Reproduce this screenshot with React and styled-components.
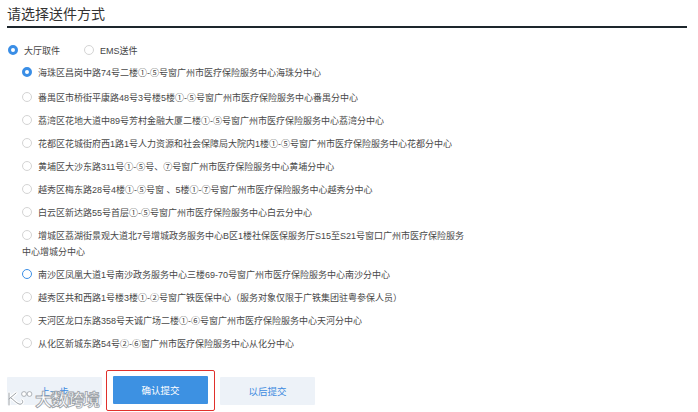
import styled, { createGlobalStyle } from "styled-components";

const addresses = [
  "海珠区昌岗中路74号二楼①-⑤号窗广州市医疗保险服务中心海珠分中心",
  "番禺区市桥街平康路48号3号楼5楼①-⑤号窗广州市医疗保险服务中心番禺分中心",
  "荔湾区花地大道中89号芳村金融大厦二楼①-⑤号窗广州市医疗保险服务中心荔湾分中心",
  "花都区花城街府西1路1号人力资源和社会保障局大院内1楼①-⑤号窗广州市医疗保险服务中心花都分中心",
  "黄埔区大沙东路311号①-⑤号、⑦号窗广州市医疗保险服务中心黄埔分中心",
  "越秀区梅东路28号4楼①-⑤号窗 、5楼①-⑦号窗广州市医疗保险服务中心越秀分中心",
  "白云区新达路55号首层①-⑤号窗广州市医疗保险服务中心白云分中心",
  "增城区荔湖街景观大道北7号增城政务服务中心B区1楼社保医保服务厅S15至S21号窗口广州市医疗保险服务中心增城分中心",
  "南沙区凤凰大道1号南沙政务服务中心三楼69-70号窗广州市医疗保险服务中心南沙分中心",
  "越秀区共和西路1号楼3楼①-②号窗广铁医保中心（服务对象仅限于广铁集团驻粤参保人员）",
  "天河区龙口东路358号天诚广场二楼①-⑥号窗广州市医疗保险服务中心天河分中心",
  "从化区新城东路54号②-⑥窗广州市医疗保险服务中心从化分中心",
];

export default function App() {
  return (
    <>
      <GlobalStyle />
      <Page>
        <Title>请选择送件方式</Title>

        {/* 取件方式 */}
        <ModeRow>
          <Option>
            <Radio $checked />
            大厅取件
          </Option>
          <Option>
            <Radio />
            EMS送件
          </Option>
        </ModeRow>

        <List>
          {addresses.map((text, i) => (
            <Item key={i} $first={i === 0}>
              <Radio $checked={i === 0} $focus={i === 8} />
              {text}
            </Item>
          ))}
        </List>

        <Actions>
          <Button>上一步</Button>
          <Highlight>
            <Button $primary>确认提交</Button>
          </Highlight>
          <Button>以后提交</Button>
        </Actions>

        <Watermark aria-hidden="true">
          <svg width="28" height="18" viewBox="0 0 28 18">
            <path
              d="M4 3 L4 15 M4 9 L11 3 M6 8 C9 10 11 13 14 14 C17 15 19 12 17 10"
              fill="none"
              stroke="#fff"
              strokeWidth="3"
              strokeLinecap="round"
            />
            <path
              d="M4 3 L4 15 M4 9 L11 3 M6 8 C9 10 11 13 14 14 C17 15 19 12 17 10"
              fill="none"
              stroke="#9aa0a6"
              strokeWidth="1"
              strokeLinecap="round"
            />
            <circle cx="19" cy="4" r="2.4" fill="#fff" stroke="#9aa0a6" strokeWidth="0.8" />
            <circle cx="24.5" cy="4" r="2.4" fill="#fff" stroke="#9aa0a6" strokeWidth="0.8" />
          </svg>
          <span>大数跨境</span>
        </Watermark>
      </Page>
    </>
  );
}

// ++++++++++++++++++++++++++++++
// Styling
// ++++++++++++

const GlobalStyle = createGlobalStyle`
  body {
    margin: 0;
    background: #fff;
    font-family: "Liberation Sans", "Noto Sans CJK SC", sans-serif;
    color: #333;
  }
`;

const Page = styled.div`
  position: relative;
  padding: 4px 0 0 7px;
  width: 680px;
  height: 408px;
`;

const Title = styled.h1`
  margin: 0;
  font-size: 14px;
  font-weight: normal;
  line-height: 20px;
  color: #333;
  padding-bottom: 2px;
  border-bottom: 2.5px solid #1d262c;
`;

const ModeRow = styled.div`
  display: flex;
  align-items: center;
  gap: 24px;
  margin-top: 16px;
  height: 12px;
  padding-left: 1px;
`;

const Option = styled.label`
  display: flex;
  align-items: center;
  font-size: 9px;
  color: #444;
`;

const Radio = styled.span`
  display: inline-block;
  box-sizing: border-box;
  width: 10px;
  height: 10px;
  border-radius: 50%;
  margin-right: 6px;
  vertical-align: -1px;
  background: #fff;
  border: ${(p) =>
    p.$checked ? "3px solid #3a8ee6" : p.$focus ? "1.3px solid #3a8ee6" : "1px solid #d4d4d4"};
`;

const List = styled.div`
  display: flex;
  flex-direction: column;
  gap: 7px;
  margin: 9px 0 0 15px;
  width: 446px;
`;

const Item = styled.label`
  display: block;
  font-size: 9px;
  line-height: 16px;
  color: #484848;
  margin-bottom: ${(p) => (p.$first ? "2px" : "0")};
`;

const Actions = styled.div`
  display: flex;
  align-items: center;
  margin-top: 18px;
`;

const Highlight = styled.div`
  margin: 0 5px 0 4px;
  padding: 5px 6px 6px 6px;
  border: 1.5px solid #e0302b;
  border-radius: 2px;
`;

const Button = styled.button`
  width: 95px;
  height: 28px;
  border: none;
  border-radius: 1px;
  font-family: inherit;
  font-size: 9.5px;
  cursor: pointer;
  background: ${(p) => (p.$primary ? "#3d91e2" : "#edf2f8")};
  color: ${(p) => (p.$primary ? "#fff" : "#3d8be0")};
`;

const Watermark = styled.div`
  position: absolute;
  left: 5px;
  top: 386px;
  display: flex;
  align-items: center;
  gap: 2px;
  pointer-events: none;

  span {
    font-size: 17px;
    font-weight: bold;
    color: #fff;
    -webkit-text-stroke: 0.8px #9aa0a6;
    letter-spacing: -1px;
  }
`;
